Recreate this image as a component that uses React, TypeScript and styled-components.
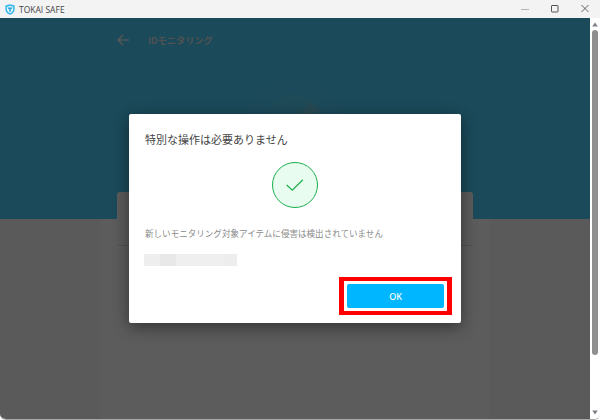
import React from 'react'
import styled, { createGlobalStyle } from 'styled-components'

const GlobalStyle = createGlobalStyle`
  html, body {
    margin: 0;
    padding: 0;
    background: #ffffff;
    overflow: hidden;
  }
`;

const Window = styled.div`
  width: 600px;
  height: 420px;
  display: flex;
  flex-direction: column;
  font-family: "Noto Sans CJK JP", "Noto Sans", sans-serif;
  box-sizing: border-box;
  border-bottom: 1px solid #a8a8a8;
  border-radius: 0 0 6px 6px;
  overflow: hidden;
`;

const TitleBar = styled.div`
  height: 18px;
  flex: none;
  background: #f3f3f3;
  display: flex;
  flex-direction: row;
  align-items: center;
  padding-left: 5px;
`;

const AppName = styled.div`
  font-family: "Open Sans", sans-serif;
  font-size: 8.5px;
  color: #444444;
  margin-left: 4px;
  flex: 1;
  white-space: nowrap;
`;

const WindowButton = styled.div`
  width: 30px;
  height: 18px;
  display: flex;
  align-items: center;
  justify-content: center;
`;

const Body = styled.div`
  flex: 1;
  display: flex;
  flex-direction: row;
  min-height: 0;
`;

const Main = styled.div`
  flex: 1;
  position: relative;
  display: flex;
  flex-direction: column;
  background: #e0e0e0;
  overflow: hidden;
`;

const Hero = styled.div`
  height: 201px;
  flex: none;
  background: #44b9e1;
  display: flex;
  flex-direction: column;
  align-items: center;
  padding-top: 12px;
  box-sizing: border-box;
`;

const Header = styled.div`
  width: 356px;
  display: flex;
  flex-direction: row;
  align-items: center;
  gap: 19px;
`;

const PageTitle = styled.div`
  font-size: 9.2px;
  font-weight: 700;
  color: #c8cccd;
`;

const HeroArt = styled.svg`
  margin-top: 24px;
`;

const Column = styled.div`
  flex: 1;
  width: 390px;
  align-self: center;
  background: #e5e5e5;
  display: flex;
  flex-direction: column;
  align-items: center;
`;

const SummaryCard = styled.div`
  width: 356px;
  height: 54px;
  margin-top: -27px;
  background: #e4e4e4;
  border-radius: 3px;
  border-bottom: 1px solid #c8c8c8;
  box-sizing: border-box;
`;

const Overlay = styled.div`
  position: absolute;
  inset: 0;
  background: rgba(0, 0, 0, 0.6);
  display: flex;
  align-items: center;
  justify-content: center;
`;

const Modal = styled.div`
  width: 332px;
  height: 209px;
  background: #ffffff;
  border-radius: 2px;
  box-shadow: 0 4px 16px rgba(0, 0, 0, 0.45);
  box-sizing: border-box;
  padding: 16px 9px 8px 16px;
  display: flex;
  flex-direction: column;
`;

const ModalTitle = styled.div`
  font-size: 11px;
  line-height: 18px;
  color: #444444;
  white-space: nowrap;
`;

const StatusRow = styled.div`
  display: flex;
  justify-content: center;
  margin-top: 14px;
  padding-right: 7px;
`;

const StatusCircle = styled.div`
  width: 46px;
  height: 46px;
  border-radius: 50%;
  border: 1px solid #1aae4c;
  background: #e8fcef;
  box-sizing: border-box;
  display: flex;
  align-items: center;
  justify-content: center;
`;

const Message = styled.div`
  font-size: 8.55px;
  line-height: 14px;
  color: #8a8a8a;
  margin-top: 18px;
  white-space: nowrap;
`;

const Masked = styled.div`
  display: flex;
  flex-direction: row;
  height: 12px;
  margin-top: 14px;
  margin-left: -1px;
`;

const MaskedBlock = styled.div<{
  width: number,
  shade: string,
}>`
  width: ${props => props.width}px;
  background: ${props => props.shade};
`;

const Footer = styled.div`
  margin-top: auto;
  display: flex;
  justify-content: flex-end;
`;

const Highlight = styled.div`
  border: solid #ff0000;
  border-width: 4px 5px;
  padding: 3px;
  box-sizing: border-box;
  width: 113px;
  height: 38px;
  display: flex;
`;

const OkButton = styled.div`
  flex: 1;
  background: #00b7ff;
  border-radius: 2px;
  color: #ffffff;
  font-family: "Noto Sans", sans-serif;
  font-size: 9px;
  font-weight: 500;
  display: flex;
  align-items: center;
  justify-content: center;
`;

const Scrollbar = styled.div`
  width: 10px;
  flex: none;
  background: #ffffff;
  display: flex;
  flex-direction: column;
  align-items: center;
  padding: 4px 0;
  box-sizing: border-box;
`;

const ScrollThumb = styled.div`
  width: 6px;
  height: 325px;
  margin-top: 3px;
  background: #8f8f8f;
  border-radius: 3px;
`;

const ScrollSpacer = styled.div`
  flex: 1;
`;

const ShieldIcon = () => (
  <svg width="10" height="11" viewBox="0 0 10 11">
    <path d="M5 0.3 L9.6 1.6 V5.2 C9.6 8 7.4 9.8 5 10.8 C2.6 9.8 0.4 8 0.4 5.2 V1.6 Z" fill="#2ab4ea" />
    <path d="M5 1.8 L8.2 2.7 V5.2 C8.2 7.2 6.7 8.5 5 9.3 C3.3 8.5 1.8 7.2 1.8 5.2 V2.7 Z" fill="#d8f2fc" />
    <path d="M3 3.5 H7 V4.8 H5.7 V7.8 H4.3 V4.8 H3 Z" fill="#1d9fd8" />
  </svg>
)

export default function App() {
  return (
    <Window>
      <GlobalStyle />
      <TitleBar>
        <ShieldIcon />
        <AppName>TOKAI SAFE</AppName>
        <WindowButton>
          <svg width="10" height="10" viewBox="0 0 10 10">
            <path d="M1 5.5 H9" stroke="#b4b4b4" strokeWidth="1" />
          </svg>
        </WindowButton>
        <WindowButton>
          <svg width="10" height="10" viewBox="0 0 10 10">
            <rect x="1.5" y="1.5" width="6.5" height="6.5" rx="0.5" fill="none" stroke="#555555" strokeWidth="1" />
          </svg>
        </WindowButton>
        <WindowButton>
          <svg width="10" height="10" viewBox="0 0 10 10">
            <path d="M1.5 1 L8.5 8 M8.5 1 L1.5 8" stroke="#555555" strokeWidth="0.9" />
          </svg>
        </WindowButton>
      </TitleBar>
      <Body>
        <Main>
          <Hero>
            <Header>
              <svg width="12" height="20" viewBox="0 0 12 12">
                <path d="M12 6 H1.5 M6 1 L1 6 L6 11" fill="none" stroke="#cfd3d5" strokeWidth="1.6" />
              </svg>
              <PageTitle>IDモニタリング</PageTitle>
            </Header>
            <HeroArt width="100" height="60" viewBox="0 0 100 60">
              <circle cx="50" cy="50" r="48" fill="#47bae0" />
              <circle cx="50" cy="50" r="30" fill="#4eb9dc" />
              <path d="M50 50 L64 28 L76 36 Z" fill="#62b6cf" />
            </HeroArt>
          </Hero>
          <Column>
            <SummaryCard />
          </Column>
          <Overlay>
            <Modal>
              <ModalTitle>特別な操作は必要ありません</ModalTitle>
              <StatusRow>
                <StatusCircle>
                  <svg width="20" height="14" viewBox="0 0 22 16">
                    <path d="M1.5 8 L8 14 L20 2" fill="none" stroke="#1aae4c" strokeWidth="1.3" />
                  </svg>
                </StatusCircle>
              </StatusRow>
              <Message>新しいモニタリング対象アイテムに侵害は検出されていません</Message>
              <Masked>
                <MaskedBlock width={16} shade="#eeeeee" />
                <MaskedBlock width={16} shade="#e8e8e8" />
                <MaskedBlock width={48} shade="#efefef" />
                <MaskedBlock width={13} shade="#ededed" />
              </Masked>
              <Footer>
                <Highlight>
                  <OkButton>OK</OkButton>
                </Highlight>
              </Footer>
            </Modal>
          </Overlay>
        </Main>
        <Scrollbar>
          <svg width="6" height="5" viewBox="0 0 6 5">
            <path d="M3 0.5 L5.8 4.5 H0.2 Z" fill="#7f7f88" />
          </svg>
          <ScrollThumb />
          <ScrollSpacer />
          <svg width="6" height="5" viewBox="0 0 6 5">
            <path d="M3 4.5 L5.8 0.5 H0.2 Z" fill="#7f7f88" />
          </svg>
        </Scrollbar>
      </Body>
    </Window>
  )
}
